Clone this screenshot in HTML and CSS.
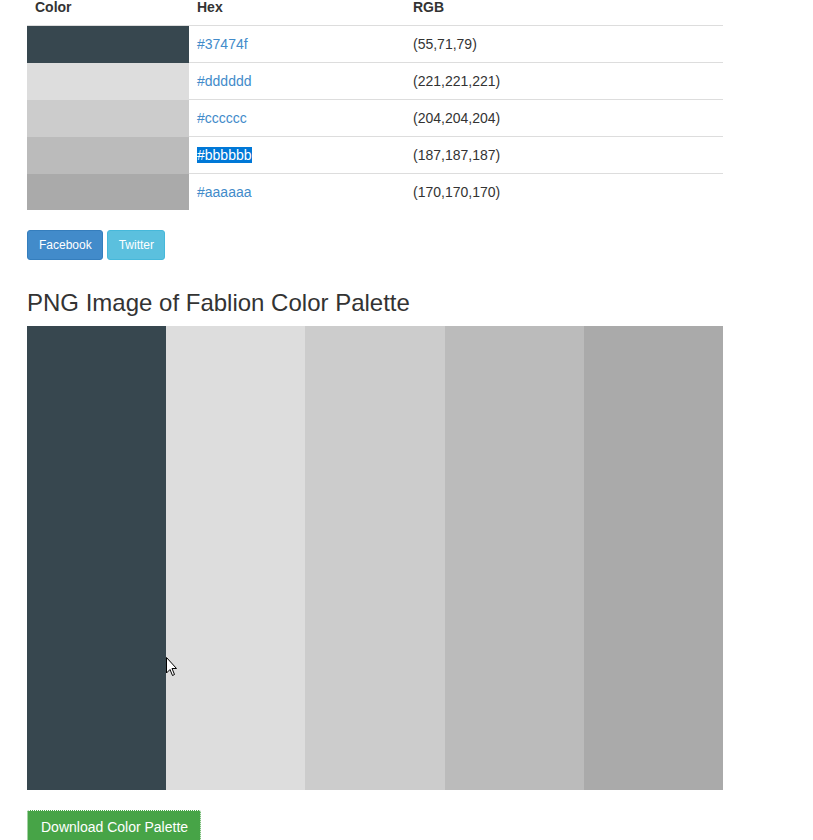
FILE: index.html
```html
<!DOCTYPE html>
<html>
<head>
<meta charset="utf-8">
<link rel="stylesheet" href="styles.css">
</head>
<body>
<div class="wrap">
  <table class="palette">
    <thead>
      <tr><th class="c-col">Color</th><th class="h-col">Hex</th><th>RGB</th></tr>
    </thead>
    <tbody>
      <tr><td class="sw sw1"></td><td><a href="#">#37474f</a></td><td>(55,71,79)</td></tr>
      <tr><td class="sw sw2"></td><td><a href="#">#dddddd</a></td><td>(221,221,221)</td></tr>
      <tr><td class="sw sw3"></td><td><a href="#">#cccccc</a></td><td>(204,204,204)</td></tr>
      <tr><td class="sw sw4"></td><td><a href="#" class="sel">#bbbbbb</a></td><td>(187,187,187)</td></tr>
      <tr><td class="sw sw5"></td><td><a href="#">#aaaaaa</a></td><td>(170,170,170)</td></tr>
    </tbody>
  </table>
  <div class="share">
    <a href="#" class="btn btn-sm btn-fb">Facebook</a>
    <a href="#" class="btn btn-sm btn-tw">Twitter</a>
  </div>
  <h3 class="title">PNG Image of Fablion Color Palette</h3>
  <div class="image">
    <div class="stripe sw1"></div>
    <div class="stripe sw2"></div>
    <div class="stripe sw3"></div>
    <div class="stripe sw4"></div>
    <div class="stripe sw5"></div>
    <svg class="cursor" width="12" height="20" viewBox="0 0 12 20"><path d="M0.5 0.5 L0.5 16 L4 12.5 L6.5 18.5 L8.5 17.5 L6 11.5 L10.5 11.5 Z" fill="#fff" stroke="#000" stroke-width="1"/></svg>
  </div>
  <a href="#" class="btn btn-dl">Download Color Palette</a>
</div>
</body>
</html>
```
FILE: styles.css
```css
html, body {
  margin: 0;
  padding: 0;
  background: #fff;
}
body {
  font-family: "Liberation Sans", Arial, Helvetica, sans-serif;
  font-size: 14px;
  line-height: 20px;
  color: #333;
  overflow: hidden;
}
.wrap {
  margin: -11px 0 0 27px;
  width: 696px;
}
.palette {
  width: 696px;
  border-collapse: collapse;
  border-spacing: 0;
  margin-bottom: 20px;
}
.palette th {
  text-align: left;
  font-weight: bold;
  padding: 8px;
  border-bottom: 1px solid #ddd;
  line-height: 20px;
}
.palette td {
  padding: 8px;
  height: 20px;
  border-top: 1px solid #ddd;
  line-height: 20px;
}
.c-col { width: 146px; }
.h-col { width: 200px; }
.palette a {
  color: #428bca;
  text-decoration: none;
}
.palette a.sel {
  background: #0078d7;
  color: #fff;
}
.sw1 { background: #37474f; }
.sw2 { background: #dddddd; }
.sw3 { background: #cccccc; }
.sw4 { background: #bbbbbb; }
.sw5 { background: #aaaaaa; }
.palette td.sw { border-top-color: transparent; }
.share {
  display: flex;
  gap: 4px;
}
.btn {
  display: inline-block;
  text-decoration: none;
  color: #fff;
  border: 1px solid transparent;
  border-radius: 3px;
}
.btn-sm {
  font-size: 12px;
  line-height: 18px;
  padding: 5px 10px 5px 11px;
}
.btn-fb {
  background: #428bca;
  border-color: #357ebd;
}
.btn-tw {
  background: #5bc0de;
  border-color: #46b8da;
}
.title {
  font-size: 24px;
  font-weight: 500;
  line-height: 26px;
  margin: 30px 0 10px;
  color: #333;
}
.image {
  position: relative;
  display: flex;
  height: 464px;
}
.stripe {
  flex: 1;
}
.cursor {
  position: absolute;
  left: 139px;
  top: 331px;
}
.btn-dl {
  margin-top: 20px;
  font-size: 14px;
  line-height: 20px;
  padding: 6px 12px 6px 13px;
  background: #47a447;
  border-color: #47a447;
  border-radius: 2px;
  outline: 1px dotted #fff;
  outline-offset: -1px;
}
```
